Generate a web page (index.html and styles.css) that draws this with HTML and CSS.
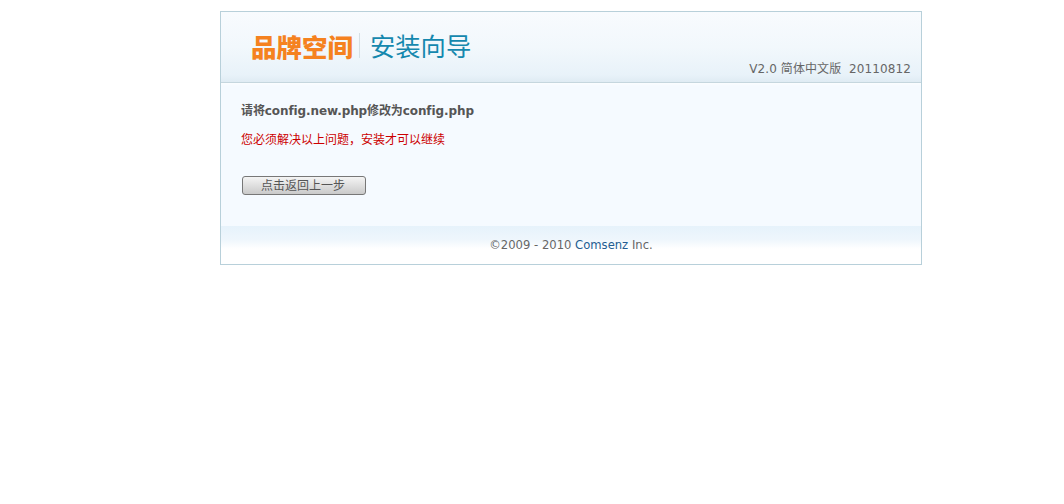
FILE: index.html
```html
<!DOCTYPE html>
<html lang="zh-CN">
<head>
<meta charset="utf-8">
<title>品牌空间 安装向导</title>
<link rel="stylesheet" href="styles.css">
</head>
<body>
<div class="container">
  <header class="header">
    <h1 class="brand">
      <span class="logo">品牌空间</span>
      <span class="wizard">安装向导</span>
    </h1>
    <span class="version">V2.0 简体中文版&nbsp; 20110812</span>
  </header>
  <main class="main">
    <h2 class="title">请将config.new.php修改为config.php</h2>
    <p class="error">您必须解决以上问题，安装才可以继续</p>
    <button class="back" type="button">点击返回上一步</button>
  </main>
  <footer class="footer">©2009 - 2010 <a class="link" href="#">Comsenz</a> Inc.</footer>
</div>
</body>
</html>
```
FILE: styles.css
```css
html, body {
  margin: 0;
  padding: 0;
  background: #fff;
}
body {
  font: 12px "DejaVu Sans", "Noto Sans CJK SC", sans-serif;
  color: #666;
}
.container {
  box-sizing: border-box;
  width: 702px;
  height: 254px;
  margin: 11px 0 0 220px;
  border: 1px solid #b8d0da;
  display: flex;
  flex-direction: column;
}
.header {
  box-sizing: border-box;
  height: 71px;
  flex: none;
  display: flex;
  justify-content: space-between;
  align-items: flex-end;
  padding: 0 10px 5px 30px;
  background: linear-gradient(#f8fbfe 0, #f2f8fc 50%, #e8f2f9 90%, #dfebf3 100%);
  border-bottom: 1px solid #c5d6de;
}
.brand {
  margin: 0 0 19px;
  display: flex;
  align-items: center;
  font-weight: normal;
}
.logo {
  font: 900 25.5px/1 "Noto Sans CJK SC", sans-serif;
  color: #f5821f;
  padding-right: 6px;
  border-right: 1px solid #d5dfe5;
  margin-right: 10px;
}
.wizard {
  font: 400 25.3px/1 "Noto Sans CJK SC", sans-serif;
  color: #1588ae;
}
.version {
  color: #666;
  line-height: 15px;
  letter-spacing: 0.1px;
}
.main {
  flex: 1;
  padding: 20px 20px 0;
  background: linear-gradient(#fbfdff 0, #f5faff 3px);
}
.title {
  margin: 0;
  font: bold 12px/16px "DejaVu Sans", "Noto Sans CJK SC", sans-serif;
  letter-spacing: -0.1px;
  color: #555;
}
.error {
  margin: 12px 0 0;
  font: 12px/16px "Noto Sans CJK SC", sans-serif;
  color: #c00;
}
.back {
  display: block;
  box-sizing: border-box;
  width: 124px;
  height: 19px;
  margin: 29px 0 0 1px;
  padding: 0 2px 2px 0;
  border: 1px solid #777;
  border-radius: 3px;
  background: linear-gradient(#f4f4f4, #cacaca);
  font: 12px/15px "Noto Sans CJK SC", sans-serif;
  color: #555;
}
.footer {
  height: 38px;
  flex: none;
  box-sizing: border-box;
  padding-top: 12px;
  text-align: center;
  font-size: 11.6px;
  line-height: 15px;
  background: linear-gradient(#e6f2fb 0, #eef6fc 35%, #fff 60%);
}
.link {
  color: #245d91;
  text-decoration: none;
}
```
